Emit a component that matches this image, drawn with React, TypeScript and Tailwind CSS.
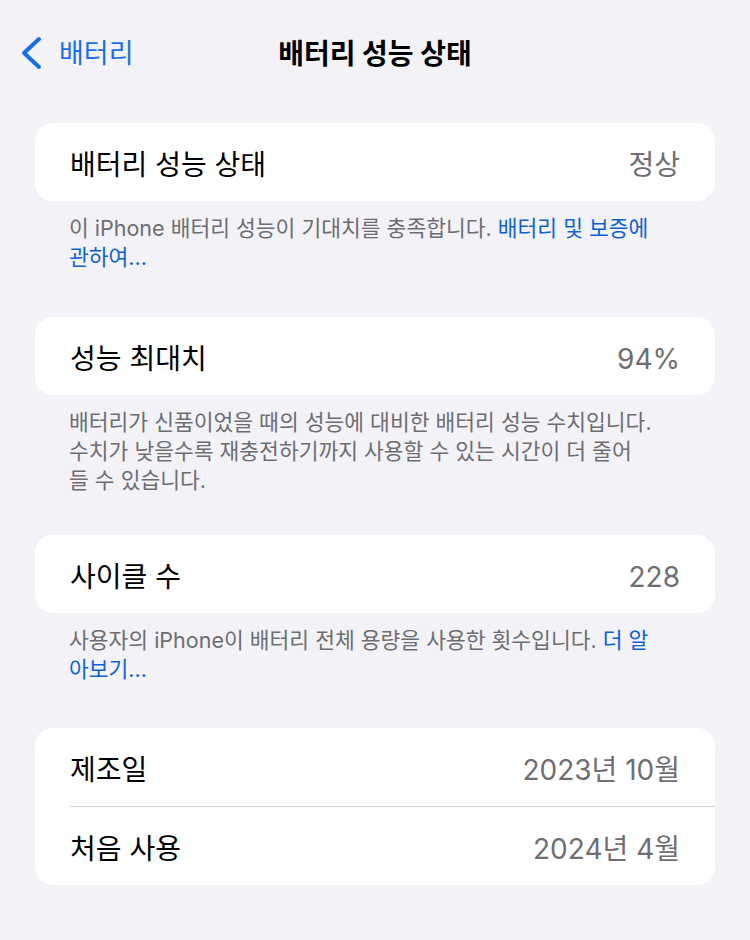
import React from "react";

const FONT = 'Inter, "Noto Sans CJK KR", "Noto Sans", sans-serif';

function Row({ label, value }: { label: string; value: string }) {
  return (
    <div className="flex h-[78px] items-center justify-between px-[35px] pt-[5px]">
      <span className="text-[28px] text-black">{label}</span>
      <span className="text-[28px] text-[#6e6e73]">{value}</span>
    </div>
  );
}

function Card({ children }: { children: React.ReactNode }) {
  return (
    <div className="mx-[35px] overflow-hidden rounded-[18px] bg-white">
      {children}
    </div>
  );
}

function Footer({ children, className }: { children: React.ReactNode; className: string }) {
  return (
    <p
      className={
        "whitespace-nowrap pl-[69px] pr-[30px] pt-[13px] text-[21.5px] leading-[29px] text-[#6d6d72] " +
        className
      }
    >
      {children}
    </p>
  );
}

export default function App() {
  return (
    <div
      className="min-h-[940px] w-[750px] bg-[#f2f2f7]"
      style={{ fontFamily: FONT }}
    >
      {/* navigation bar */}
      <div className="grid h-[78px] grid-cols-[1fr_auto_1fr] items-center pt-[30px]">
        <div className="flex items-center pl-[21px]">
          <svg width="22" height="34" viewBox="0 0 22 34" fill="none" className="-mt-[2px]">
            <polyline
              points="18,3 3,17 18,31"
              stroke="#1b6fe3"
              strokeWidth="4"
              strokeLinecap="round"
              strokeLinejoin="round"
            />
          </svg>
          <span className="ml-[16px] text-[27px] text-[#1b6fe3]">배터리</span>
        </div>
        <div className="text-[28px] font-bold text-black">배터리 성능 상태</div>
        <div />
      </div>

      <div className="mt-[45px]">
        <Card>
          <Row label="배터리 성능 상태" value="정상" />
        </Card>
        <Footer className="mb-[45px]">
          이 iPhone 배터리 성능이 기대치를 충족합니다.{" "}
          <span className="text-[#0e62d0]">
            배터리 및 보증에
            <br />
            관하여...
          </span>
        </Footer>

        <Card>
          <Row label="성능 최대치" value="94%" />
        </Card>
        <Footer className="mb-[40px]">
          배터리가 신품이었을 때의 성능에 대비한 배터리 성능 수치입니다.
          <br />
          수치가 낮을수록 재충전하기까지 사용할 수 있는 시간이 더 줄어
          <br />
          들 수 있습니다.
        </Footer>

        <Card>
          <Row label="사이클 수" value="228" />
        </Card>
        <Footer className="mb-[44px]">
          사용자의 iPhone이 배터리 전체 용량을 사용한 횟수입니다.{" "}
          <span className="text-[#0e62d0]">
            더 알
            <br />
            아보기...
          </span>
        </Footer>

        <Card>
          <Row label="제조일" value="2023년 10월" />
          <div className="ml-[35px] h-px bg-[#d1d1d6]" />
          <Row label="처음 사용" value="2024년 4월" />
        </Card>
      </div>
    </div>
  );
}
